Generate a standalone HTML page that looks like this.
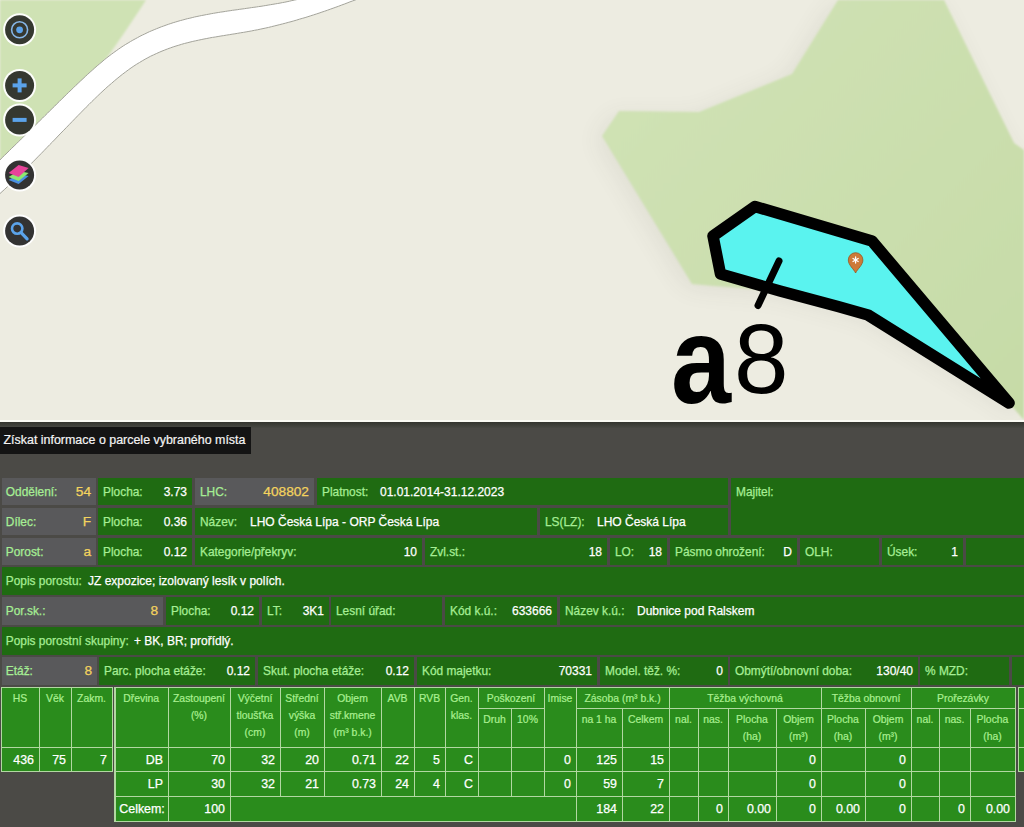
<!DOCTYPE html>
<html><head><meta charset="utf-8"><style>
*{margin:0;padding:0;box-sizing:border-box}
html,body{width:1024px;height:827px;overflow:hidden;background:#4b4a46;font-family:"Liberation Sans",sans-serif}
#map{position:absolute;left:0;top:0;width:1024px;height:422px;overflow:hidden;background:#ecebe1}
#panel{position:absolute;left:0;top:422px;width:1024px;height:405px;background:#4b4a46}
.band{position:absolute;left:0;top:422px;width:1024px;height:6px;background:linear-gradient(#34352f,#484944)}
.mline{position:absolute;left:0;top:420px;width:1024px;height:2px;background:#fbfbf4}
.title{position:absolute;left:0;top:427px;width:251px;height:27px;background:#141414;color:#f4f4f4;font-size:12.45px;line-height:27.5px;padding-left:3.5px;white-space:nowrap;-webkit-text-stroke:0.2px currentColor}
.c{position:absolute;overflow:hidden;white-space:nowrap}
.c span{position:absolute;top:6.7px;line-height:14px;-webkit-text-stroke:0.25px currentColor}
.l{left:5px;color:#a6ee94;font-size:11.9px}
.v{color:#fff;font-size:12px}
.vy{color:#f4d35e;font-size:13.7px}
.r{right:5px}
</style></head><body>
<div id="map"><svg width="1024" height="422" viewBox="0 0 1024 422" style="position:absolute;left:0;top:0">
<defs>
<filter id="bl" x="-20%" y="-20%" width="140%" height="140%"><feGaussianBlur stdDeviation="0.8"/></filter>
<filter id="sh" x="-50%" y="-50%" width="200%" height="200%"><feGaussianBlur stdDeviation="12"/></filter><linearGradient id="gg" x1="0" y1="0" x2="1" y2="1"><stop offset="0" stop-color="#d1e3b6"/><stop offset="1" stop-color="#c6dba7"/></linearGradient>
</defs>
<rect width="1024" height="422" fill="#edece1"/>
<path d="M0,0 L146,0 Q128,28 104,62 L0,170 Z" fill="#cfe2b4" filter="url(#bl)"/>
<g filter="url(#sh)" opacity="0.07">
<polygon points="838,0 944,0 1014,143 1024,150 1024,420 1009,403 868,315 780,291 714,286 692,284 602,136 619,111 699,112 792,74" fill="#303020" transform="translate(-6,4)"/>
</g>
<polygon points="838,0 944,0 1014,143 1024,150 1024,420 1009,403 868,315 780,291 714,286 692,284 602,136 619,111 699,112 792,74" fill="url(#gg)" filter="url(#bl)"/>
<path d="M-12.0,171.7 L-9.6,169.4 L-7.3,167.0 L-4.9,164.7 L-2.5,162.3 L-0.1,160.0 L2.2,157.6 L4.6,155.3 L7.0,153.0 L9.4,150.6 L11.7,148.3 L14.1,146.0 L16.5,143.7 L18.9,141.3 L21.2,139.0 L23.6,136.7 L26.0,134.3 L28.4,132.0 L30.7,129.7 L33.1,127.3 L35.5,125.0 L37.9,122.7 L40.2,120.3 L42.6,118.0 L45.0,115.6 L47.4,113.3 L49.7,110.9 L52.1,108.6 L54.5,106.3 L56.8,103.9 L59.2,101.6 L61.6,99.2 L64.0,96.9 L66.3,94.6 L68.7,92.3 L71.1,90.0 L73.5,87.7 L75.8,85.4 L78.2,83.2 L80.6,80.9 L83.0,78.7 L85.3,76.5 L87.7,74.3 L90.1,72.1 L92.5,70.0 L94.8,67.9 L97.2,65.8 L99.6,63.8 L102.0,61.8 L104.3,59.8 L106.7,57.9 L109.1,56.0 L111.5,54.2 L113.8,52.5 L116.2,50.8 L118.6,49.1 L120.9,47.5 L123.3,45.9 L125.7,44.4 L128.1,43.0 L130.4,41.6 L132.8,40.2 L135.2,38.9 L137.6,37.6 L139.9,36.3 L142.3,35.1 L144.7,34.0 L147.1,32.8 L149.4,31.7 L151.8,30.7 L154.2,29.7 L156.6,28.7 L158.9,27.8 L161.3,26.8 L163.7,26.0 L166.1,25.1 L168.4,24.3 L170.8,23.5 L173.2,22.7 L175.6,22.0 L177.9,21.3 L180.3,20.6 L182.7,20.0 L185.1,19.3 L187.4,18.7 L189.8,18.2 L192.2,17.6 L194.5,17.0 L196.9,16.5 L199.3,16.0 L201.7,15.5 L204.0,15.1 L206.4,14.6 L208.8,14.2 L211.2,13.7 L213.5,13.3 L215.9,12.9 L218.3,12.5 L220.7,12.1 L223.0,11.8 L225.4,11.4 L227.8,11.0 L230.2,10.7 L232.5,10.3 L234.9,10.0 L237.3,9.7 L239.7,9.3 L242.0,9.0 L244.4,8.7 L246.8,8.3 L249.2,8.0 L251.5,7.6 L253.9,7.3 L256.3,7.0 L258.6,6.6 L261.0,6.3 L263.4,5.9 L265.8,5.5 L268.1,5.1 L270.5,4.7 L272.9,4.3 L275.3,3.9 L277.6,3.5 L280.0,3.1 L282.4,2.6 L284.8,2.2 L287.1,1.7 L289.5,1.2 L291.9,0.6 L294.3,0.1 L296.6,-0.4 L299.0,-1.0 L301.4,-1.6 L303.8,-2.3 L306.1,-2.9 L308.5,-3.6 L310.9,-4.3 L313.3,-5.0 L315.6,-5.7 L318.0,-6.5 L330.0,-20.0 L378.0,-9.4 L375.2,-8.2 L372.4,-7.1 L369.6,-5.9 L366.8,-4.7 L364.0,-3.6 L361.2,-2.5 L358.4,-1.3 L355.6,-0.2 L352.7,0.9 L349.9,1.9 L347.1,3.0 L344.3,4.1 L341.5,5.1 L338.7,6.2 L335.9,7.2 L333.1,8.2 L330.3,9.2 L327.5,10.2 L324.7,11.2 L321.9,12.1 L319.1,13.1 L316.3,14.0 L313.5,14.9 L310.7,15.8 L307.9,16.7 L305.1,17.6 L302.2,18.4 L299.4,19.2 L296.6,20.1 L293.8,20.9 L291.0,21.7 L288.2,22.4 L285.4,23.2 L282.6,23.9 L279.8,24.6 L277.0,25.3 L274.2,26.0 L271.4,26.7 L268.6,27.4 L265.8,28.0 L263.0,28.6 L260.2,29.2 L257.4,29.8 L254.5,30.3 L251.7,30.9 L248.9,31.4 L246.1,31.9 L243.3,32.4 L240.5,32.8 L237.7,33.3 L234.9,33.8 L232.1,34.2 L229.3,34.7 L226.5,35.1 L223.7,35.6 L220.9,36.0 L218.1,36.5 L215.3,37.0 L212.5,37.4 L209.7,37.9 L206.8,38.5 L204.0,39.0 L201.2,39.6 L198.4,40.2 L195.6,40.8 L192.8,41.4 L190.0,42.1 L187.2,42.8 L184.4,43.5 L181.6,44.3 L178.8,45.2 L176.0,46.0 L173.2,46.9 L170.4,47.9 L167.6,48.9 L164.8,50.0 L162.0,51.1 L159.2,52.3 L156.3,53.6 L153.5,54.9 L150.7,56.2 L147.9,57.7 L145.1,59.2 L142.3,60.8 L139.5,62.5 L136.7,64.2 L133.9,66.0 L131.1,67.9 L128.3,69.9 L125.5,72.0 L122.7,74.1 L119.9,76.3 L117.1,78.6 L114.3,80.9 L111.5,83.4 L108.6,85.8 L105.8,88.3 L103.0,90.9 L100.2,93.5 L97.4,96.2 L94.6,98.9 L91.8,101.6 L89.0,104.4 L86.2,107.2 L83.4,110.0 L80.6,112.9 L77.8,115.7 L75.0,118.6 L72.2,121.5 L69.4,124.4 L66.6,127.3 L63.8,130.2 L60.9,133.1 L58.1,136.0 L55.3,139.0 L52.5,141.9 L49.7,144.7 L46.9,147.6 L44.1,150.5 L41.3,153.4 L38.5,156.2 L35.7,159.1 L32.9,161.9 L30.1,164.7 L27.3,167.5 L24.5,170.3 L21.7,173.1 L18.9,175.8 L16.1,178.5 L13.3,181.2 L10.4,183.9 L7.6,186.5 L4.8,189.2 L2.0,191.7 L-0.8,194.3 L-3.6,196.8 L-6.4,199.3 L-9.2,201.8 L-12.0,204.2 Z" fill="#ffffff"/>
<path d="M-12.0,171.7 L-9.6,169.4 L-7.3,167.0 L-4.9,164.7 L-2.5,162.3 L-0.1,160.0 L2.2,157.6 L4.6,155.3 L7.0,153.0 L9.4,150.6 L11.7,148.3 L14.1,146.0 L16.5,143.7 L18.9,141.3 L21.2,139.0 L23.6,136.7 L26.0,134.3 L28.4,132.0 L30.7,129.7 L33.1,127.3 L35.5,125.0 L37.9,122.7 L40.2,120.3 L42.6,118.0 L45.0,115.6 L47.4,113.3 L49.7,110.9 L52.1,108.6 L54.5,106.3 L56.8,103.9 L59.2,101.6 L61.6,99.2 L64.0,96.9 L66.3,94.6 L68.7,92.3 L71.1,90.0 L73.5,87.7 L75.8,85.4 L78.2,83.2 L80.6,80.9 L83.0,78.7 L85.3,76.5 L87.7,74.3 L90.1,72.1 L92.5,70.0 L94.8,67.9 L97.2,65.8 L99.6,63.8 L102.0,61.8 L104.3,59.8 L106.7,57.9 L109.1,56.0 L111.5,54.2 L113.8,52.5 L116.2,50.8 L118.6,49.1 L120.9,47.5 L123.3,45.9 L125.7,44.4 L128.1,43.0 L130.4,41.6 L132.8,40.2 L135.2,38.9 L137.6,37.6 L139.9,36.3 L142.3,35.1 L144.7,34.0 L147.1,32.8 L149.4,31.7 L151.8,30.7 L154.2,29.7 L156.6,28.7 L158.9,27.8 L161.3,26.8 L163.7,26.0 L166.1,25.1 L168.4,24.3 L170.8,23.5 L173.2,22.7 L175.6,22.0 L177.9,21.3 L180.3,20.6 L182.7,20.0 L185.1,19.3 L187.4,18.7 L189.8,18.2 L192.2,17.6 L194.5,17.0 L196.9,16.5 L199.3,16.0 L201.7,15.5 L204.0,15.1 L206.4,14.6 L208.8,14.2 L211.2,13.7 L213.5,13.3 L215.9,12.9 L218.3,12.5 L220.7,12.1 L223.0,11.8 L225.4,11.4 L227.8,11.0 L230.2,10.7 L232.5,10.3 L234.9,10.0 L237.3,9.7 L239.7,9.3 L242.0,9.0 L244.4,8.7 L246.8,8.3 L249.2,8.0 L251.5,7.6 L253.9,7.3 L256.3,7.0 L258.6,6.6 L261.0,6.3 L263.4,5.9 L265.8,5.5 L268.1,5.1 L270.5,4.7 L272.9,4.3 L275.3,3.9 L277.6,3.5 L280.0,3.1 L282.4,2.6 L284.8,2.2 L287.1,1.7 L289.5,1.2 L291.9,0.6 L294.3,0.1 L296.6,-0.4 L299.0,-1.0 L301.4,-1.6 L303.8,-2.3 L306.1,-2.9 L308.5,-3.6 L310.9,-4.3 L313.3,-5.0 L315.6,-5.7 L318.0,-6.5" fill="none" stroke="#a4a49b" stroke-width="1"/>
<path d="M-12.0,204.2 L-9.2,201.8 L-6.4,199.3 L-3.6,196.8 L-0.8,194.3 L2.0,191.7 L4.8,189.2 L7.6,186.5 L10.4,183.9 L13.3,181.2 L16.1,178.5 L18.9,175.8 L21.7,173.1 L24.5,170.3 L27.3,167.5 L30.1,164.7 L32.9,161.9 L35.7,159.1 L38.5,156.2 L41.3,153.4 L44.1,150.5 L46.9,147.6 L49.7,144.7 L52.5,141.9 L55.3,139.0 L58.1,136.0 L60.9,133.1 L63.8,130.2 L66.6,127.3 L69.4,124.4 L72.2,121.5 L75.0,118.6 L77.8,115.7 L80.6,112.9 L83.4,110.0 L86.2,107.2 L89.0,104.4 L91.8,101.6 L94.6,98.9 L97.4,96.2 L100.2,93.5 L103.0,90.9 L105.8,88.3 L108.6,85.8 L111.5,83.4 L114.3,80.9 L117.1,78.6 L119.9,76.3 L122.7,74.1 L125.5,72.0 L128.3,69.9 L131.1,67.9 L133.9,66.0 L136.7,64.2 L139.5,62.5 L142.3,60.8 L145.1,59.2 L147.9,57.7 L150.7,56.2 L153.5,54.9 L156.3,53.6 L159.2,52.3 L162.0,51.1 L164.8,50.0 L167.6,48.9 L170.4,47.9 L173.2,46.9 L176.0,46.0 L178.8,45.2 L181.6,44.3 L184.4,43.5 L187.2,42.8 L190.0,42.1 L192.8,41.4 L195.6,40.8 L198.4,40.2 L201.2,39.6 L204.0,39.0 L206.8,38.5 L209.7,37.9 L212.5,37.4 L215.3,37.0 L218.1,36.5 L220.9,36.0 L223.7,35.6 L226.5,35.1 L229.3,34.7 L232.1,34.2 L234.9,33.8 L237.7,33.3 L240.5,32.8 L243.3,32.4 L246.1,31.9 L248.9,31.4 L251.7,30.9 L254.5,30.3 L257.4,29.8 L260.2,29.2 L263.0,28.6 L265.8,28.0 L268.6,27.4 L271.4,26.7 L274.2,26.0 L277.0,25.3 L279.8,24.6 L282.6,23.9 L285.4,23.2 L288.2,22.4 L291.0,21.7 L293.8,20.9 L296.6,20.1 L299.4,19.2 L302.2,18.4 L305.1,17.6 L307.9,16.7 L310.7,15.8 L313.5,14.9 L316.3,14.0 L319.1,13.1 L321.9,12.1 L324.7,11.2 L327.5,10.2 L330.3,9.2 L333.1,8.2 L335.9,7.2 L338.7,6.2 L341.5,5.1 L344.3,4.1 L347.1,3.0 L349.9,1.9 L352.7,0.9 L355.6,-0.2 L358.4,-1.3 L361.2,-2.5 L364.0,-3.6 L366.8,-4.7 L369.6,-5.9 L372.4,-7.1 L375.2,-8.2 L378.0,-9.4" fill="none" stroke="#a4a49b" stroke-width="1"/>
<polygon points="755,206.5 713,236 720.5,274 780,291 838,306.5 868,315 1009,403 872,241" fill="#5af3ef" stroke="#000" stroke-width="11.5" stroke-linejoin="round"/>
<line x1="779" x2="758" y1="261" y2="305.5" stroke="#000" stroke-width="7" stroke-linecap="round"/>
<g transform="translate(855.6,260)">
<path d="M0,13 C-1.8,9 -7.3,5 -7.3,0 A7.3,7.3 0 1 1 7.3,0 C7.3,5 1.8,9 0,13 Z" fill="#cd7a38" stroke="#9a5420" stroke-width="0.8"/>
<g stroke="#fff" stroke-width="1.3" stroke-linecap="round"><line x1="0" y1="-3" x2="0" y2="3"/><line x1="-2.6" y1="-1.5" x2="2.6" y2="1.5"/><line x1="-2.6" y1="1.5" x2="2.6" y2="-1.5"/></g>
</g>
<text x="671" y="403" style="font-family:'Liberation Sans'" font-weight="bold" font-size="108" fill="#000" transform="translate(0,403) scale(1,1.15) translate(0,-403)">a</text>
<text x="734" y="393" style="font-family:'Liberation Sans'" font-size="98" fill="#000">8</text>
<g transform="translate(19.6,29.8)"><circle r="16.5" fill="#ffffff" opacity="0.95"/><circle r="14.5" fill="#353830"/><circle r="8" fill="none" stroke="#86b6e6" stroke-width="1.6"/><circle r="3.4" fill="#5ba3ea"/></g><g transform="translate(19.6,85.4)"><circle r="16.5" fill="#ffffff" opacity="0.95"/><circle r="14.5" fill="#353830"/><rect x="-7" y="-2" width="14" height="4" fill="#5ba3ea"/><rect x="-2" y="-7" width="4" height="14" fill="#5ba3ea"/></g><g transform="translate(19.6,119.9)"><circle r="16.5" fill="#ffffff" opacity="0.95"/><circle r="14.5" fill="#353830"/><rect x="-7" y="-2" width="14" height="4" fill="#5ba3ea"/></g><g transform="translate(19.6,175.1)"><circle r="16.5" fill="#ffffff" opacity="0.95"/><circle r="14.5" fill="#333333"/><path d="M-11,5 L-1,-1 L9,1 L-1,9 Z" fill="#4a8fe0"/><path d="M-11,2 L-1,-4 L9,-2 L-1,6 Z" fill="#8de870"/><path d="M-11,-2 L-1,-10 L9,-7 L-1,2 Z" fill="#e8449a"/></g><g transform="translate(19.6,230.9)"><circle r="16.5" fill="#ffffff" opacity="0.95"/><circle r="14.5" fill="#333333"/><circle cx="-2.4" cy="-2.3" r="5.2" fill="none" stroke="#5ba3ea" stroke-width="2.6"/><line x1="1.5" y1="1.8" x2="7.5" y2="8" stroke="#5ba3ea" stroke-width="3.2" stroke-linecap="round"/></g></svg></div>
<div id="panel"></div>
<div class="band"></div><div class="mline"></div>
<div class="title">Získat informace o parcele vybraného místa</div>
<div class="c" style="left:2px;top:478px;width:94px;height:27px;background:#59595b"><span class="l" style="left:3.8px">Oddělení:</span><span class="vy r">54</span></div><div class="c" style="left:98px;top:478px;width:94px;height:27px;background:#1f6b12"><span class="l">Plocha:</span><span class="v r">3.73</span></div><div class="c" style="left:195px;top:478px;width:119px;height:27px;background:#59595b"><span class="l">LHC:</span><span class="vy r">408802</span></div><div class="c" style="left:317px;top:478px;width:411px;height:27px;background:#1f6b12"><span class="l">Platnost:</span><span class="v" style="left:63px">01.01.2014-31.12.2023</span></div><div class="c" style="left:731px;top:478px;width:293px;height:57px;background:#1f6b12"><span class="l">Majitel:</span></div><div class="c" style="left:2px;top:508px;width:94px;height:27px;background:#59595b"><span class="l" style="left:3.8px">Dílec:</span><span class="vy r">F</span></div><div class="c" style="left:98px;top:508px;width:94px;height:27px;background:#1f6b12"><span class="l">Plocha:</span><span class="v r">0.36</span></div><div class="c" style="left:195px;top:508px;width:342px;height:27px;background:#1f6b12"><span class="l">Název:</span><span class="v" style="left:55px">LHO Česká Lípa - ORP Česká Lípa</span></div><div class="c" style="left:540px;top:508px;width:188px;height:27px;background:#1f6b12"><span class="l">LS(LZ):</span><span class="v" style="left:57px">LHO Česká Lípa</span></div><div class="c" style="left:2px;top:538px;width:94px;height:27px;background:#59595b"><span class="l" style="left:3.8px">Porost:</span><span class="vy r">a</span></div><div class="c" style="left:98px;top:538px;width:94px;height:27px;background:#1f6b12"><span class="l">Plocha:</span><span class="v r">0.12</span></div><div class="c" style="left:195px;top:538px;width:227px;height:27px;background:#1f6b12"><span class="l">Kategorie/překryv:</span><span class="v r">10</span></div><div class="c" style="left:425px;top:538px;width:182px;height:27px;background:#1f6b12"><span class="l">Zvl.st.:</span><span class="v r">18</span></div><div class="c" style="left:610px;top:538px;width:57px;height:27px;background:#1f6b12"><span class="l">LO:</span><span class="v r">18</span></div><div class="c" style="left:670px;top:538px;width:127px;height:27px;background:#1f6b12"><span class="l">Pásmo ohrožení:</span><span class="v r">D</span></div><div class="c" style="left:800px;top:538px;width:79px;height:27px;background:#1f6b12"><span class="l">OLH:</span></div><div class="c" style="left:882px;top:538px;width:81px;height:27px;background:#1f6b12"><span class="l">Úsek:</span><span class="v r">1</span></div><div class="c" style="left:966px;top:538px;width:58px;height:27px;background:#1f6b12"></div><div class="c" style="left:2px;top:567px;width:1022px;height:28px;background:#1f6b12"><span class="l" style="left:3.8px">Popis porostu:</span><span class="v" style="left:86px">JZ expozice; izolovaný lesík v polích.</span></div><div class="c" style="left:2px;top:597px;width:161px;height:28px;background:#59595b"><span class="l" style="left:3.8px">Por.sk.:</span><span class="vy r">8</span></div><div class="c" style="left:166px;top:597px;width:93px;height:28px;background:#1f6b12"><span class="l">Plocha:</span><span class="v r">0.12</span></div><div class="c" style="left:262px;top:597px;width:67px;height:28px;background:#1f6b12"><span class="l">LT:</span><span class="v r">3K1</span></div><div class="c" style="left:331px;top:597px;width:111px;height:28px;background:#1f6b12"><span class="l">Lesní úřad:</span></div><div class="c" style="left:445px;top:597px;width:112px;height:28px;background:#1f6b12"><span class="l">Kód k.ú.:</span><span class="v r">633666</span></div><div class="c" style="left:560px;top:597px;width:464px;height:28px;background:#1f6b12"><span class="l">Název k.ú.:</span><span class="v" style="left:77px">Dubnice pod Ralskem</span></div><div class="c" style="left:2px;top:627px;width:1022px;height:28px;background:#1f6b12"><span class="l" style="left:3.8px">Popis porostní skupiny:</span><span class="v" style="left:132px">+ BK, BR; prořídlý.</span></div><div class="c" style="left:2px;top:657px;width:95px;height:28px;background:#59595b"><span class="l" style="left:3.8px">Etáž:</span><span class="vy r">8</span></div><div class="c" style="left:99px;top:657px;width:156px;height:28px;background:#1f6b12"><span class="l">Parc. plocha etáže:</span><span class="v r">0.12</span></div><div class="c" style="left:258px;top:657px;width:156px;height:28px;background:#1f6b12"><span class="l">Skut. plocha etáže:</span><span class="v r">0.12</span></div><div class="c" style="left:417px;top:657px;width:180px;height:28px;background:#1f6b12"><span class="l">Kód majetku:</span><span class="v r">70331</span></div><div class="c" style="left:600px;top:657px;width:128px;height:28px;background:#1f6b12"><span class="l">Model. těž. %:</span><span class="v r">0</span></div><div class="c" style="left:730px;top:657px;width:188px;height:28px;background:#1f6b12"><span class="l">Obmýtí/obnovní doba:</span><span class="v r">130/40</span></div><div class="c" style="left:920px;top:657px;width:89px;height:28px;background:#1f6b12"><span class="l">% MZD:</span></div><div class="c" style="left:1012px;top:657px;width:12px;height:28px;background:#1f6b12"></div>
<style>
.tf{position:absolute;background:#2a8c1c}
.bl{position:absolute;background:#b2d8a2}
.th{position:absolute;text-align:center;color:#aaf092;font-size:10.4px;line-height:17px;white-space:nowrap;-webkit-text-stroke:0.2px currentColor}
.td{position:absolute;color:#fff;font-size:12.4px;line-height:16px;white-space:nowrap;padding:0 5px;-webkit-text-stroke:0.25px currentColor}
</style><div class="tf" style="left:1px;top:687px;width:111px;height:84px"></div>
<div class="bl" style="left:1px;top:687px;width:1.3px;height:85.3px"></div>
<div class="bl" style="left:39px;top:687px;width:1.3px;height:85.3px"></div>
<div class="bl" style="left:71px;top:687px;width:1.3px;height:85.3px"></div>
<div class="bl" style="left:112px;top:687px;width:1.3px;height:85.3px"></div>
<div class="bl" style="left:1px;top:687px;width:112.3px;height:1.3px"></div>
<div class="bl" style="left:1px;top:747px;width:112.3px;height:1.3px"></div>
<div class="bl" style="left:1px;top:771px;width:112.3px;height:1.3px"></div>
<div class="th" style="left:1px;top:690px;width:38px">HS</div>
<div class="th" style="left:39px;top:690px;width:32px">Věk</div>
<div class="th" style="left:71px;top:690px;width:41px">Zakm.</div>
<div class="td" style="left:1px;top:751.5px;width:38px;text-align:right">436</div>
<div class="td" style="left:39px;top:751.5px;width:32px;text-align:right">75</div>
<div class="td" style="left:71px;top:751.5px;width:41px;text-align:right">7</div>
<div class="tf" style="left:114.3px;top:687px;width:900.7px;height:134px"></div>
<div class="bl" style="left:114.3px;top:687px;width:902.0px;height:1.3px"></div>
<div class="bl" style="left:114.3px;top:747px;width:902.0px;height:1.3px"></div>
<div class="bl" style="left:114.3px;top:771px;width:902.0px;height:1.3px"></div>
<div class="bl" style="left:114.3px;top:796px;width:902.0px;height:1.3px"></div>
<div class="bl" style="left:114.3px;top:821px;width:902.0px;height:1.3px"></div>
<div class="bl" style="left:478px;top:708px;width:67.3px;height:1.3px"></div>
<div class="bl" style="left:576px;top:708px;width:440.3px;height:1.3px"></div>
<div class="bl" style="left:114.3px;top:687px;width:1.3px;height:135.3px"></div>
<div class="bl" style="left:168px;top:687px;width:1.3px;height:135.3px"></div>
<div class="bl" style="left:230px;top:687px;width:1.3px;height:135.3px"></div>
<div class="bl" style="left:280px;top:687px;width:1.3px;height:135.3px"></div>
<div class="bl" style="left:324px;top:687px;width:1.3px;height:135.3px"></div>
<div class="bl" style="left:381px;top:687px;width:1.3px;height:135.3px"></div>
<div class="bl" style="left:414px;top:687px;width:1.3px;height:135.3px"></div>
<div class="bl" style="left:445px;top:687px;width:1.3px;height:135.3px"></div>
<div class="bl" style="left:478px;top:687px;width:1.3px;height:135.3px"></div>
<div class="bl" style="left:544px;top:687px;width:1.3px;height:135.3px"></div>
<div class="bl" style="left:576px;top:687px;width:1.3px;height:135.3px"></div>
<div class="bl" style="left:669px;top:687px;width:1.3px;height:135.3px"></div>
<div class="bl" style="left:821px;top:687px;width:1.3px;height:135.3px"></div>
<div class="bl" style="left:911px;top:687px;width:1.3px;height:135.3px"></div>
<div class="bl" style="left:1015px;top:687px;width:1.3px;height:135.3px"></div>
<div class="bl" style="left:511px;top:708px;width:1.3px;height:114.3px"></div>
<div class="bl" style="left:622px;top:708px;width:1.3px;height:114.3px"></div>
<div class="bl" style="left:698px;top:708px;width:1.3px;height:114.3px"></div>
<div class="bl" style="left:728px;top:708px;width:1.3px;height:114.3px"></div>
<div class="bl" style="left:776px;top:708px;width:1.3px;height:114.3px"></div>
<div class="bl" style="left:865px;top:708px;width:1.3px;height:114.3px"></div>
<div class="bl" style="left:939px;top:708px;width:1.3px;height:114.3px"></div>
<div class="bl" style="left:970px;top:708px;width:1.3px;height:114.3px"></div>
<div class="th" style="left:114.3px;top:690px;width:53.7px">Dřevina</div>
<div class="th" style="left:168px;top:690px;width:62px">Zastoupení<br>(%)</div>
<div class="th" style="left:230px;top:690px;width:50px">Výčetní<br>tloušťka<br>(cm)</div>
<div class="th" style="left:280px;top:690px;width:44px">Střední<br>výška<br>(m)</div>
<div class="th" style="left:324px;top:690px;width:57px">Objem<br>stř.kmene<br>(m³ b.k.)</div>
<div class="th" style="left:381px;top:690px;width:33px">AVB</div>
<div class="th" style="left:414px;top:690px;width:31px">RVB</div>
<div class="th" style="left:445px;top:690px;width:33px">Gen.<br>klas.</div>
<div class="th" style="left:478px;top:690px;width:66px">Poškození</div>
<div class="th" style="left:544px;top:690px;width:32px">Imise</div>
<div class="th" style="left:576px;top:690px;width:93px">Zásoba (m³ b.k.)</div>
<div class="th" style="left:669px;top:690px;width:152px">Těžba výchovná</div>
<div class="th" style="left:821px;top:690px;width:90px">Těžba obnovní</div>
<div class="th" style="left:911px;top:690px;width:104px">Prořezávky</div>
<div class="th" style="left:478px;top:711px;width:33px">Druh</div>
<div class="th" style="left:511px;top:711px;width:33px">10%</div>
<div class="th" style="left:576px;top:711px;width:46px">na 1 ha</div>
<div class="th" style="left:622px;top:711px;width:47px">Celkem</div>
<div class="th" style="left:669px;top:711px;width:29px">nal.</div>
<div class="th" style="left:698px;top:711px;width:30px">nas.</div>
<div class="th" style="left:728px;top:711px;width:48px">Plocha<br>(ha)</div>
<div class="th" style="left:776px;top:711px;width:45px">Objem<br>(m³)</div>
<div class="th" style="left:821px;top:711px;width:44px">Plocha<br>(ha)</div>
<div class="th" style="left:865px;top:711px;width:46px">Objem<br>(m³)</div>
<div class="th" style="left:911px;top:711px;width:28px">nal.</div>
<div class="th" style="left:939px;top:711px;width:31px">nas.</div>
<div class="th" style="left:970px;top:711px;width:45px">Plocha<br>(ha)</div>
<div class="td" style="left:114.3px;top:751.5px;width:53.7px;text-align:right">DB</div>
<div class="td" style="left:168px;top:751.5px;width:62px;text-align:right">70</div>
<div class="td" style="left:230px;top:751.5px;width:50px;text-align:right">32</div>
<div class="td" style="left:280px;top:751.5px;width:44px;text-align:right">20</div>
<div class="td" style="left:324px;top:751.5px;width:57px;text-align:right">0.71</div>
<div class="td" style="left:381px;top:751.5px;width:33px;text-align:right">22</div>
<div class="td" style="left:414px;top:751.5px;width:31px;text-align:right">5</div>
<div class="td" style="left:445px;top:751.5px;width:33px;text-align:right">C</div>
<div class="td" style="left:544px;top:751.5px;width:32px;text-align:right">0</div>
<div class="td" style="left:576px;top:751.5px;width:46px;text-align:right">125</div>
<div class="td" style="left:622px;top:751.5px;width:47px;text-align:right">15</div>
<div class="td" style="left:776px;top:751.5px;width:45px;text-align:right">0</div>
<div class="td" style="left:865px;top:751.5px;width:46px;text-align:right">0</div>
<div class="td" style="left:114.3px;top:775.5px;width:53.7px;text-align:right">LP</div>
<div class="td" style="left:168px;top:775.5px;width:62px;text-align:right">30</div>
<div class="td" style="left:230px;top:775.5px;width:50px;text-align:right">32</div>
<div class="td" style="left:280px;top:775.5px;width:44px;text-align:right">21</div>
<div class="td" style="left:324px;top:775.5px;width:57px;text-align:right">0.73</div>
<div class="td" style="left:381px;top:775.5px;width:33px;text-align:right">24</div>
<div class="td" style="left:414px;top:775.5px;width:31px;text-align:right">4</div>
<div class="td" style="left:445px;top:775.5px;width:33px;text-align:right">C</div>
<div class="td" style="left:544px;top:775.5px;width:32px;text-align:right">0</div>
<div class="td" style="left:576px;top:775.5px;width:46px;text-align:right">59</div>
<div class="td" style="left:622px;top:775.5px;width:47px;text-align:right">7</div>
<div class="td" style="left:776px;top:775.5px;width:45px;text-align:right">0</div>
<div class="td" style="left:865px;top:775.5px;width:46px;text-align:right">0</div>
<div class="td" style="left:114.3px;top:800.5px;width:53.7px;text-align:right">Celkem:</div>
<div class="td" style="left:168px;top:800.5px;width:62px;text-align:right">100</div>
<div class="td" style="left:576px;top:800.5px;width:46px;text-align:right">184</div>
<div class="td" style="left:622px;top:800.5px;width:47px;text-align:right">22</div>
<div class="td" style="left:698px;top:800.5px;width:30px;text-align:right">0</div>
<div class="td" style="left:728px;top:800.5px;width:48px;text-align:right">0.00</div>
<div class="td" style="left:776px;top:800.5px;width:45px;text-align:right">0</div>
<div class="td" style="left:821px;top:800.5px;width:44px;text-align:right">0.00</div>
<div class="td" style="left:865px;top:800.5px;width:46px;text-align:right">0</div>
<div class="td" style="left:939px;top:800.5px;width:31px;text-align:right">0</div>
<div class="td" style="left:970px;top:800.5px;width:45px;text-align:right">0.00</div>
<div class="tf" style="left:231px;top:797px;width:345px;height:24px"></div>
<div class="tf" style="left:1018px;top:687px;width:42px;height:84px"></div>
<div class="bl" style="left:1018px;top:687px;width:1.3px;height:85.3px"></div>
<div class="bl" style="left:1018px;top:687px;width:43.3px;height:1.3px"></div>
<div class="bl" style="left:1018px;top:708px;width:43.3px;height:1.3px"></div>
<div class="bl" style="left:1018px;top:747px;width:43.3px;height:1.3px"></div>
<div class="bl" style="left:1018px;top:771px;width:43.3px;height:1.3px"></div>
</body></html>
